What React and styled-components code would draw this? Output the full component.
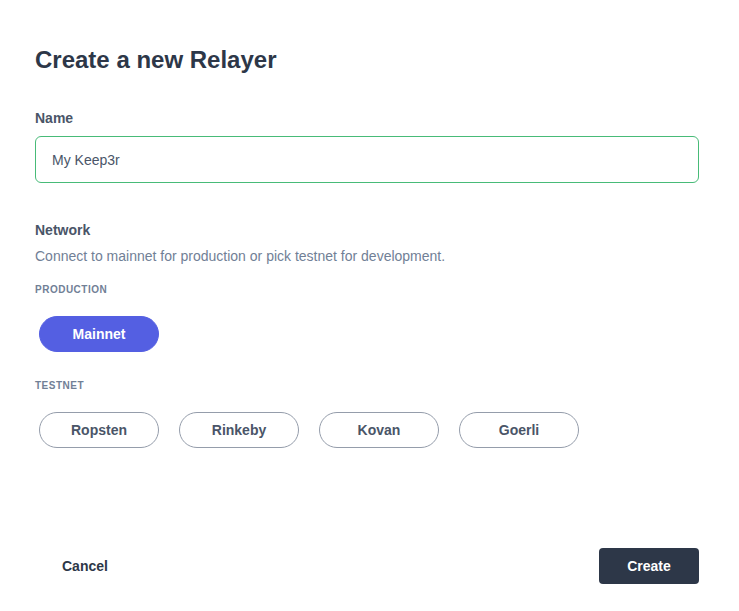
import React, { useState } from 'react'
import styled, { createGlobalStyle } from 'styled-components'

const GlobalStyle = createGlobalStyle`
  html, body {
    margin: 0;
    padding: 0;
    background: #fff;
    font-family: "Liberation Sans", Arial, sans-serif;
  }
`

const Page = styled.div`
  width: 739px;
  height: 611px;
  box-sizing: border-box;
  padding: 44px 40px 27px 35px;
  display: flex;
  flex-direction: column;
`

const Title = styled.h1`
  margin: 0 0 32px;
  font-size: 24px;
  line-height: 32px;
  font-weight: 700;
  color: #2d3748;
`

const Label = styled.label`
  display: block;
  font-size: 14px;
  line-height: 20px;
  font-weight: 700;
  color: #4a5568;
  margin-bottom: ${props => props.gap || 0}px;
`

const TextInput = styled.input`
  display: block;
  width: 100%;
  height: 47px;
  box-sizing: border-box;
  padding: 0 16px;
  border: 1px solid #48bb78;
  border-radius: 6px;
  font-family: inherit;
  font-size: 14px;
  color: #4a5568;
  outline: none;
  margin-bottom: 37px;
`

const Hint = styled.p`
  margin: 6px 0 17px;
  font-size: 14px;
  line-height: 20px;
  color: #718096;
`

const Group = styled.div`
  font-size: 10px;
  line-height: 14px;
  font-weight: 700;
  letter-spacing: 0.05em;
  text-transform: uppercase;
  color: #718096;
  margin-bottom: 19px;
`

const Pills = styled.div`
  display: flex;
  gap: 20px;
  padding-left: 4px;
  margin-bottom: 27px;
`

const Pill = styled.button`
  width: 120px;
  height: 36px;
  box-sizing: border-box;
  border-radius: 18px;
  font-family: inherit;
  font-size: 14px;
  font-weight: 700;
  cursor: pointer;
  border: 1px solid ${props => (props.active ? '#545fe2' : '#959dab')};
  background: ${props => (props.active ? '#545fe2' : '#fff')};
  color: ${props => (props.active ? '#fff' : '#4a5568')};
`

const Footer = styled.div`
  margin-top: auto;
  display: flex;
  justify-content: space-between;
  align-items: center;
`

const Cancel = styled.button`
  border: 0;
  background: none;
  padding: 0 0 0 27px;
  font-family: inherit;
  font-size: 14px;
  font-weight: 700;
  color: #2d3748;
  cursor: pointer;
`

const Submit = styled.button`
  width: 100px;
  height: 36px;
  border: 0;
  border-radius: 4px;
  background: #2d3748;
  color: #fff;
  font-family: inherit;
  font-size: 14px;
  font-weight: 700;
  cursor: pointer;
`

const testnets = ['Ropsten', 'Rinkeby', 'Kovan', 'Goerli']

export default function App() {
  const [name, setName] = useState('My Keep3r')
  const [network, setNetwork] = useState('Mainnet')

  return (
    <>
      <GlobalStyle />
      <Page>
        <Title>Create a new Relayer</Title>

        <Label gap={8}>Name</Label>
        <TextInput value={name} onChange={e => setName(e.target.value)} />

        <Label>Network</Label>
        <Hint>Connect to mainnet for production or pick testnet for development.</Hint>

        <Group>Production</Group>
        <Pills>
          <Pill active={network === 'Mainnet'} onClick={() => setNetwork('Mainnet')}>
            Mainnet
          </Pill>
        </Pills>

        <Group>Testnet</Group>
        <Pills>
          {testnets.map(n => (
            <Pill key={n} active={network === n} onClick={() => setNetwork(n)}>
              {n}
            </Pill>
          ))}
        </Pills>

        <Footer>
          <Cancel>Cancel</Cancel>
          <Submit>Create</Submit>
        </Footer>
      </Page>
    </>
  )
}
